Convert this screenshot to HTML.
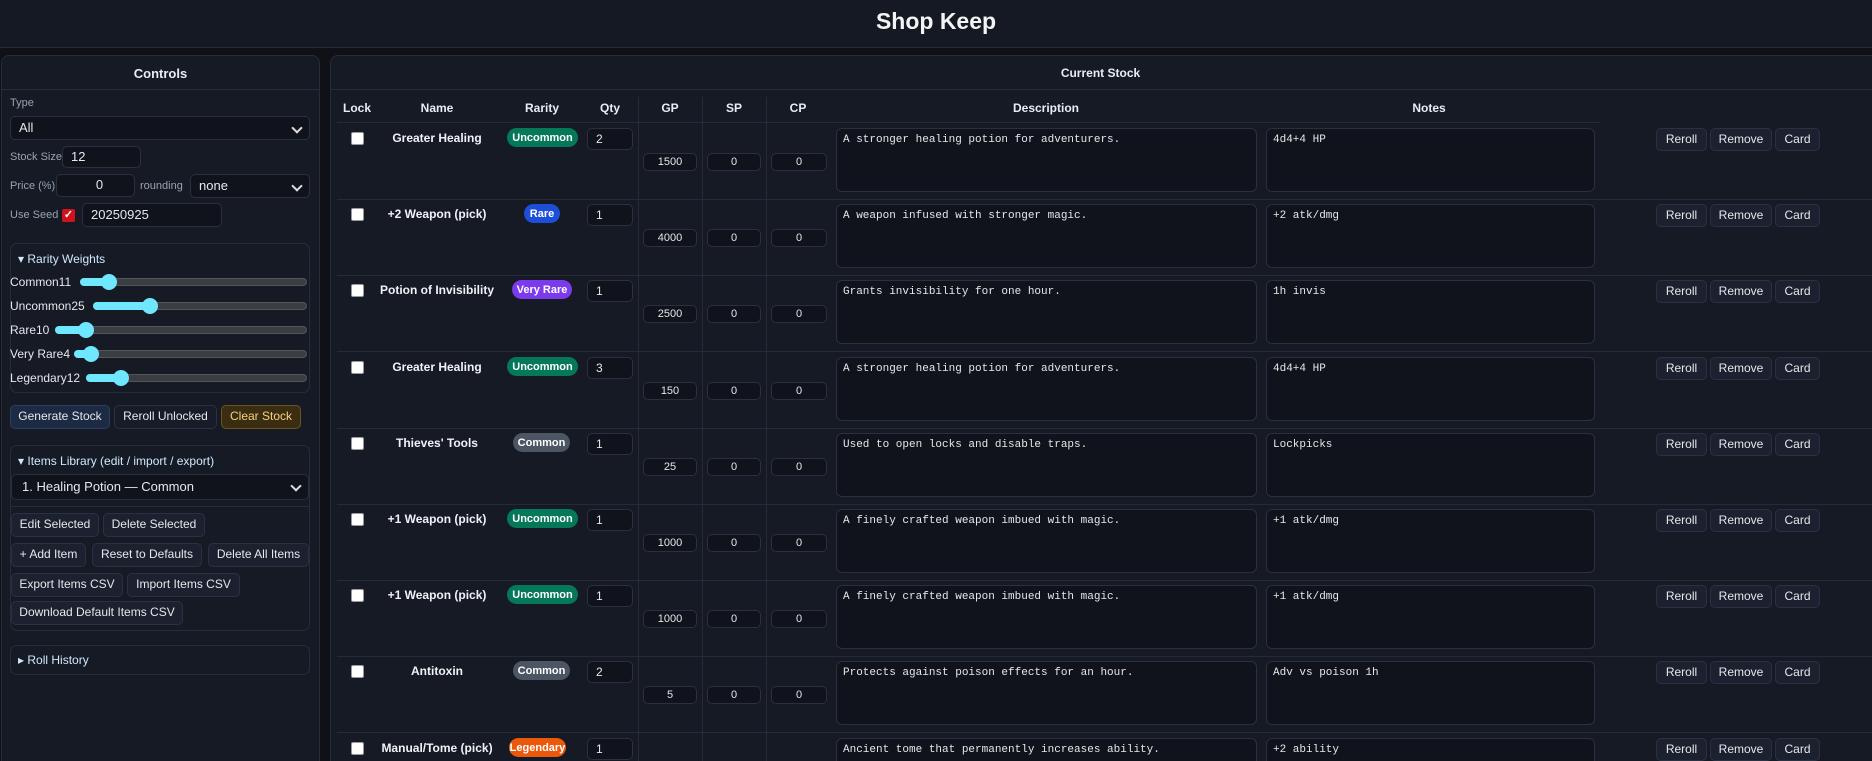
<!DOCTYPE html>
<html style="width:1872px;height:761px;overflow:hidden"><head><meta charset="utf-8"><style>
*{box-sizing:border-box;margin:0;padding:0}
html,body{width:1872px;height:761px;overflow:hidden}
body{background:#0f1117;font-family:"Liberation Sans",sans-serif;color:#e5e7eb;position:relative}
.a{position:absolute}
.hdr{left:0;top:0;width:1872px;height:48px;background:#151923;border-bottom:1px solid #262c3a}
.hdr h1{position:absolute;left:0;width:1872px;top:8px;text-align:center;font-size:23px;font-weight:bold;color:#f3f4f6}
.panel{background:#161a25;border:1px solid #262c3a;border-bottom:none;border-radius:8px 8px 0 0}
.ptitle{font-size:13px;font-weight:bold;text-align:center;color:#e8ecf5}
.lbl{font-size:11px;color:#9aa1b0}
.inp{background:#10131b;border:1px solid #2a3040;border-radius:5px;font-size:12px;color:#e5e7eb;padding-left:8px;line-height:20px}
.sel::after{content:"";position:absolute;right:8px;top:7px;width:6px;height:6px;border-right:2px solid #ddd;border-bottom:2px solid #ddd;transform:rotate(45deg)}
.btn{background:#1c2130;border:1px solid #2a3142;border-radius:5px;font-size:12px;color:#e5e7eb;text-align:center;line-height:21px}
.box{border:1px solid #262c3a;border-radius:7px}
.track{height:8px;border-radius:4px;background:#3a3d44;border:1px solid #555}
.fill{height:8px;border-radius:4px;background:#6ee7ff;top:-1px;left:-1px}
.knob{width:16px;height:16px;border-radius:8px;background:#6ee7ff;top:-5px}
.th{font-size:12px;font-weight:bold;color:#e8ecf5;top:101px;text-align:center}
.row{left:337px;width:1535px;height:77px;border-bottom:1px solid #252a38}
.cb{width:13px;height:13px;background:#fff;border-radius:2px;border:1px solid #999;left:14px;top:9px}
.nm{font-size:12px;font-weight:bold;color:#f0f2f7;text-align:center;width:160px;left:20px;top:8px}
.bd{font-size:11px;font-weight:bold;color:#fff;border-radius:10px;height:19px;line-height:20px;top:5px;text-align:center}
.q{left:250px;top:5px;width:46px;height:22px;line-height:20px}
.m{top:30px;height:18px;line-height:16px;font-size:11px;text-align:center;padding:0}
.ta{top:5px;height:64px;background:#10131b;border:1px solid #2a3040;border-radius:6px;font-family:"Liberation Mono",monospace;font-size:11px;color:#e5e7eb;padding:5px 6px}
.rb{top:5px;height:23px;line-height:21px}
.vl{width:1px;background:#252a38;top:97px;height:664px}
</style></head><body>
<div class="a hdr"><h1>Shop Keep</h1></div>

<div class="a panel" style="left:1px;top:55px;width:319px;height:706px"></div>
<div class="a" style="left:1px;top:89px;width:319px;height:1px;background:#262c3a"></div>
<div class="a ptitle" style="left:1px;top:66px;width:319px">Controls</div>
<div class="a lbl" style="left:10px;top:97px">Type</div>
<div class="a inp sel" style="left:10px;top:116px;width:300px;height:24px;line-height:22px;font-size:13px">All</div>
<div class="a lbl" style="left:10px;top:151px">Stock Size</div>
<div class="a inp" style="left:62px;top:146px;width:79px;height:22px;font-size:13px">12</div>
<div class="a lbl" style="left:10px;top:180px">Price (%)</div>
<div class="a inp" style="left:56px;top:174px;width:79px;height:23px;text-align:center;font-size:13px">0</div>
<div class="a lbl" style="left:140px;top:180px">rounding</div>
<div class="a inp sel" style="left:190px;top:174px;width:120px;height:24px;line-height:22px;font-size:13px">none</div>
<div class="a lbl" style="left:10px;top:209px">Use Seed</div>
<div class="a" style="left:62px;top:209px;width:13px;height:13px;background:#d0121c;border-radius:2px;color:#fff;font-size:11px;line-height:13px;text-align:center;font-weight:bold">✓</div>
<div class="a inp" style="left:82px;top:203px;width:140px;height:24px;line-height:22px;font-size:13px">20250925</div>

<div class="a box" style="left:10px;top:243px;width:300px;height:150px"></div>
<div class="a" style="left:18px;top:252px;font-size:12px;color:#cfe8ff">▾ Rarity Weights</div>
<div class="a" style="left:10px;top:275px;font-size:12px">Common11</div>
<div class="a track" style="left:80px;top:278px;width:227px"><div class="a fill" style="width:30px"></div><div class="a knob" style="left:20px"></div></div>
<div class="a" style="left:10px;top:299px;font-size:12px">Uncommon25</div>
<div class="a track" style="left:93px;top:302px;width:214px"><div class="a fill" style="width:58px"></div><div class="a knob" style="left:48px"></div></div>
<div class="a" style="left:10px;top:323px;font-size:12px">Rare10</div>
<div class="a track" style="left:55px;top:326px;width:252px"><div class="a fill" style="width:30px"></div><div class="a knob" style="left:22px"></div></div>
<div class="a" style="left:10px;top:347px;font-size:12px">Very Rare4</div>
<div class="a track" style="left:74px;top:350px;width:233px"><div class="a fill" style="width:16px"></div><div class="a knob" style="left:8px"></div></div>
<div class="a" style="left:10px;top:371px;font-size:12px">Legendary12</div>
<div class="a track" style="left:86px;top:374px;width:221px"><div class="a fill" style="width:36px"></div><div class="a knob" style="left:26px"></div></div>

<div class="a btn" style="left:10px;top:405px;width:100px;height:24px;background:#1c2a44;border-color:#2c3f62">Generate Stock</div>
<div class="a btn" style="left:114px;top:405px;width:103px;height:24px;background:#181c28">Reroll Unlocked</div>
<div class="a btn" style="left:221px;top:405px;width:80px;height:24px;background:#3a2d12;border-color:#6b5420;color:#f5d27a">Clear Stock</div>

<div class="a box" style="left:10px;top:445px;width:300px;height:186px"></div>
<div class="a" style="left:18px;top:454px;font-size:12px;color:#cfe8ff">▾ Items Library (edit / import / export)</div>
<div class="a inp sel" style="left:11px;top:474px;width:298px;height:26px;line-height:24px;font-size:13px;padding-left:10px">1. Healing Potion — Common</div>
<div class="a" style="left:10px;top:506px;width:300px;height:1px;background:#262c3a"></div>
<div class="a btn" style="left:11px;top:513px;width:88px;height:24px">Edit Selected</div>
<div class="a btn" style="left:103px;top:513px;width:102px;height:24px">Delete Selected</div>
<div class="a btn" style="left:11px;top:543px;width:75px;height:24px">+ Add Item</div>
<div class="a btn" style="left:92px;top:543px;width:110px;height:24px">Reset to Defaults</div>
<div class="a btn" style="left:208px;top:543px;width:101px;height:24px">Delete All Items</div>
<div class="a btn" style="left:11px;top:573px;width:112px;height:24px">Export Items CSV</div>
<div class="a btn" style="left:127px;top:573px;width:113px;height:24px">Import Items CSV</div>
<div class="a btn" style="left:11px;top:601px;width:172px;height:24px">Download Default Items CSV</div>

<div class="a box" style="left:10px;top:645px;width:300px;height:30px"></div>
<div class="a" style="left:18px;top:653px;font-size:12px;color:#cfe8ff">▸ Roll History</div>

<div class="a panel" style="left:330px;top:55px;width:1542px;height:706px;border-right:none;border-radius:8px 0 0 0"></div>
<div class="a" style="left:331px;top:89px;width:1541px;height:1px;background:#262c3a"></div>
<div class="a ptitle" style="left:330px;top:66px;width:1541px;font-size:12px">Current Stock</div>
<div class="a th" style="left:337px;width:40px">Lock</div>
<div class="a th" style="left:397px;width:80px">Name</div>
<div class="a th" style="left:502px;width:80px">Rarity</div>
<div class="a th" style="left:590px;width:40px">Qty</div>
<div class="a th" style="left:650px;width:40px">GP</div>
<div class="a th" style="left:714px;width:40px">SP</div>
<div class="a th" style="left:778px;width:40px">CP</div>
<div class="a th" style="left:996px;width:100px">Description</div>
<div class="a th" style="left:1379px;width:100px">Notes</div>
<div class="a" style="left:337px;top:122px;width:1263px;height:1px;background:#252a38"></div>
<div class="a vl" style="left:638px"></div>
<div class="a vl" style="left:702px"></div>
<div class="a vl" style="left:766px"></div>

<div class="a row" style="top:123px"><div class="a cb"></div><div class="a nm">Greater Healing</div><div class="a bd" style="left:170px;width:71px;background:#05785a">Uncommon</div><div class="a inp q">2</div><div class="a inp m" style="left:306px;width:54px">1500</div><div class="a inp m" style="left:370px;width:54px">0</div><div class="a inp m" style="left:434px;width:56px">0</div><div class="a ta" style="left:499px;width:421px">A stronger healing potion for adventurers.</div><div class="a ta" style="left:929px;width:329px">4d4+4 HP</div><div class="a btn rb" style="left:1319px;width:51px">Reroll</div><div class="a btn rb" style="left:1373px;width:62px">Remove</div><div class="a btn rb" style="left:1438px;width:45px">Card</div></div>

<div class="a row" style="top:199px"><div class="a cb"></div><div class="a nm">+2 Weapon (pick)</div><div class="a bd" style="left:187px;width:36px;background:#1d4ed8">Rare</div><div class="a inp q">1</div><div class="a inp m" style="left:306px;width:54px">4000</div><div class="a inp m" style="left:370px;width:54px">0</div><div class="a inp m" style="left:434px;width:56px">0</div><div class="a ta" style="left:499px;width:421px">A weapon infused with stronger magic.</div><div class="a ta" style="left:929px;width:329px">+2 atk/dmg</div><div class="a btn rb" style="left:1319px;width:51px">Reroll</div><div class="a btn rb" style="left:1373px;width:62px">Remove</div><div class="a btn rb" style="left:1438px;width:45px">Card</div></div>

<div class="a row" style="top:275px"><div class="a cb"></div><div class="a nm">Potion of Invisibility</div><div class="a bd" style="left:175px;width:60px;background:#7c3aed">Very Rare</div><div class="a inp q">1</div><div class="a inp m" style="left:306px;width:54px">2500</div><div class="a inp m" style="left:370px;width:54px">0</div><div class="a inp m" style="left:434px;width:56px">0</div><div class="a ta" style="left:499px;width:421px">Grants invisibility for one hour.</div><div class="a ta" style="left:929px;width:329px">1h invis</div><div class="a btn rb" style="left:1319px;width:51px">Reroll</div><div class="a btn rb" style="left:1373px;width:62px">Remove</div><div class="a btn rb" style="left:1438px;width:45px">Card</div></div>

<div class="a row" style="top:352px"><div class="a cb"></div><div class="a nm">Greater Healing</div><div class="a bd" style="left:170px;width:71px;background:#05785a">Uncommon</div><div class="a inp q">3</div><div class="a inp m" style="left:306px;width:54px">150</div><div class="a inp m" style="left:370px;width:54px">0</div><div class="a inp m" style="left:434px;width:56px">0</div><div class="a ta" style="left:499px;width:421px">A stronger healing potion for adventurers.</div><div class="a ta" style="left:929px;width:329px">4d4+4 HP</div><div class="a btn rb" style="left:1319px;width:51px">Reroll</div><div class="a btn rb" style="left:1373px;width:62px">Remove</div><div class="a btn rb" style="left:1438px;width:45px">Card</div></div>

<div class="a row" style="top:428px"><div class="a cb"></div><div class="a nm">Thieves' Tools</div><div class="a bd" style="left:176px;width:57px;background:#4b5563">Common</div><div class="a inp q">1</div><div class="a inp m" style="left:306px;width:54px">25</div><div class="a inp m" style="left:370px;width:54px">0</div><div class="a inp m" style="left:434px;width:56px">0</div><div class="a ta" style="left:499px;width:421px">Used to open locks and disable traps.</div><div class="a ta" style="left:929px;width:329px">Lockpicks</div><div class="a btn rb" style="left:1319px;width:51px">Reroll</div><div class="a btn rb" style="left:1373px;width:62px">Remove</div><div class="a btn rb" style="left:1438px;width:45px">Card</div></div>

<div class="a row" style="top:504px"><div class="a cb"></div><div class="a nm">+1 Weapon (pick)</div><div class="a bd" style="left:170px;width:71px;background:#05785a">Uncommon</div><div class="a inp q">1</div><div class="a inp m" style="left:306px;width:54px">1000</div><div class="a inp m" style="left:370px;width:54px">0</div><div class="a inp m" style="left:434px;width:56px">0</div><div class="a ta" style="left:499px;width:421px">A finely crafted weapon imbued with magic.</div><div class="a ta" style="left:929px;width:329px">+1 atk/dmg</div><div class="a btn rb" style="left:1319px;width:51px">Reroll</div><div class="a btn rb" style="left:1373px;width:62px">Remove</div><div class="a btn rb" style="left:1438px;width:45px">Card</div></div>

<div class="a row" style="top:580px"><div class="a cb"></div><div class="a nm">+1 Weapon (pick)</div><div class="a bd" style="left:170px;width:71px;background:#05785a">Uncommon</div><div class="a inp q">1</div><div class="a inp m" style="left:306px;width:54px">1000</div><div class="a inp m" style="left:370px;width:54px">0</div><div class="a inp m" style="left:434px;width:56px">0</div><div class="a ta" style="left:499px;width:421px">A finely crafted weapon imbued with magic.</div><div class="a ta" style="left:929px;width:329px">+1 atk/dmg</div><div class="a btn rb" style="left:1319px;width:51px">Reroll</div><div class="a btn rb" style="left:1373px;width:62px">Remove</div><div class="a btn rb" style="left:1438px;width:45px">Card</div></div>

<div class="a row" style="top:656px"><div class="a cb"></div><div class="a nm">Antitoxin</div><div class="a bd" style="left:176px;width:57px;background:#4b5563">Common</div><div class="a inp q">2</div><div class="a inp m" style="left:306px;width:54px">5</div><div class="a inp m" style="left:370px;width:54px">0</div><div class="a inp m" style="left:434px;width:56px">0</div><div class="a ta" style="left:499px;width:421px">Protects against poison effects for an hour.</div><div class="a ta" style="left:929px;width:329px">Adv vs poison 1h</div><div class="a btn rb" style="left:1319px;width:51px">Reroll</div><div class="a btn rb" style="left:1373px;width:62px">Remove</div><div class="a btn rb" style="left:1438px;width:45px">Card</div></div>

<div class="a row" style="top:733px;height:28px;border:none;overflow:hidden"><div class="a cb"></div><div class="a nm">Manual/Tome (pick)</div><div class="a bd" style="left:172px;width:57px;background:#ea580c">Legendary</div><div class="a inp q">1</div><div class="a ta" style="left:499px;width:421px;height:23px;border-bottom:none;border-radius:6px 6px 0 0">Ancient tome that permanently increases ability.</div><div class="a ta" style="left:929px;width:329px;height:23px;border-bottom:none;border-radius:6px 6px 0 0">+2 ability</div><div class="a btn rb" style="left:1319px;width:51px">Reroll</div><div class="a btn rb" style="left:1373px;width:62px">Remove</div><div class="a btn rb" style="left:1438px;width:45px">Card</div></div>
</body></html>
